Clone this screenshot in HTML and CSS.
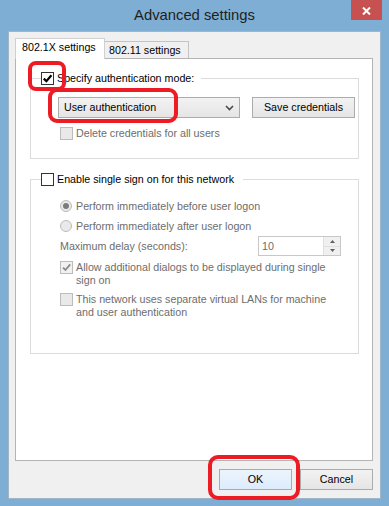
FILE: index.html
```html
<!DOCTYPE html>
<html lang="en">
<head>
<meta charset="utf-8">
<title>Advanced settings</title>
<link rel="stylesheet" href="styles.css">
</head>
<body>
<div class="window">
  <div class="titlebar">
    <div class="title">Advanced settings</div>
    <div class="close"><svg width="9" height="8" viewBox="0 0 9 8"><path d="M1 0.5L8 7.5M8 0.5L1 7.5" stroke="#fff" stroke-width="2"/></svg></div>
  </div>
  <div class="client">
    <div class="tabs">
      <div class="tab active">802.1X settings</div>
      <div class="tab">802.11 settings</div>
    </div>
    <div class="panel">
      <fieldset class="group g1">
        <legend><span class="opt legend-in"><span class="cb"><svg width="11" height="11" viewBox="0 0 11 11"><path d="M1.8 5.6L4.4 8.2L9.4 2.2" fill="none" stroke="#000" stroke-width="2.2"/></svg></span><span>Specify authentication mode:</span></span></legend>
        <div class="auth-row">
          <div class="select"><span>User authentication</span><svg class="chev" width="9" height="6" viewBox="0 0 9 6"><path d="M1 1L4.5 4.5L8 1" fill="none" stroke="#4a4a4a" stroke-width="1.6"/></svg></div>
          <button class="btn save">Save credentials</button>
        </div>
        <div class="opt dis sub del"><span class="cb off"></span><span>Delete credentials for all users</span></div>
      </fieldset>
      <fieldset class="group g2">
        <legend><span class="opt legend-in"><span class="cb"></span><span>Enable single sign on for this network</span></span></legend>
        <div class="opt dis sub r1"><span class="radio on"></span><span>Perform immediately before user logon</span></div>
        <div class="opt dis sub r2"><span class="radio"></span><span>Perform immediately after user logon</span></div>
        <div class="delay sub dis">
          <span class="delay-label">Maximum delay (seconds):</span>
          <div class="spin">
            <span class="val">10</span>
            <span class="arrows">
              <span class="arr"><svg width="5" height="3" viewBox="0 0 5 3"><path d="M0 3L2.5 0L5 3Z" fill="#606060"/></svg></span>
              <span class="arr"><svg width="5" height="3" viewBox="0 0 5 3"><path d="M0 0L2.5 3L5 0Z" fill="#606060"/></svg></span>
            </span>
          </div>
        </div>
        <div class="opt dis sub c3"><span class="cb off"><svg width="11" height="11" viewBox="0 0 11 11"><path d="M2 5.6L4.4 8L9.2 2.4" fill="none" stroke="#8a8a8a" stroke-width="1.8"/></svg></span><span class="wrap">Allow additional dialogs to be displayed during single sign on</span></div>
        <div class="opt dis sub c4"><span class="cb off"></span><span class="wrap">This network uses separate virtual LANs for machine and user authentication</span></div>
      </fieldset>
    </div>
    <div class="actions">
      <button class="btn ok">OK</button>
      <button class="btn cancel">Cancel</button>
    </div>
  </div>
  <div class="mark m1"></div>
  <div class="mark m2"></div>
  <div class="mark m3"></div>
</div>
</body>
</html>
```
FILE: styles.css
```css
* { box-sizing: border-box; }
html, body { margin: 0; padding: 0; }
body {
  width: 389px;
  height: 506px;
  overflow: hidden;
  background: #7eaed3;
  font-family: "Liberation Sans", Arial, sans-serif;
  font-size: 10.7px;
  line-height: 13px;
  color: #000;
}
.window {
  position: relative;
  height: 506px;
  display: flex;
  flex-direction: column;
}
.titlebar {
  flex: none;
  height: 31px;
  display: flex;
  align-items: flex-start;
  padding: 0 7px 0 38px;
}
.title {
  flex: 1;
  text-align: center;
  font-size: 14.8px;
  line-height: 31px;
  color: #1e1e1e;
}
.close {
  flex: none;
  width: 31px;
  height: 20px;
  background: #c75050;
  display: flex;
  align-items: center;
  justify-content: center;
  padding-top: 2px;
}
.close svg { display: block; }
.client {
  flex: none;
  height: 468px;
  margin: 0 8px;
  background: #f0f0f0;
  border: 1px solid #9fb6c8;
  padding: 6px 7px 8px 6px;
  display: flex;
  flex-direction: column;
}
.tabs {
  flex: none;
  height: 20px;
  display: flex;
  align-items: flex-end;
}
.tab {
  width: 85px;
  height: 17px;
  margin-left: -1px;
  border: 1px solid #c4c4c4;
  border-bottom: none;
  background: #f0f0f0;
  padding: 2px 0 0 4px;
  white-space: nowrap;
}
.tab.active {
  width: 90px;
  height: 21px;
  margin-left: 0;
  margin-bottom: -1px;
  position: relative;
  z-index: 1;
  background: #fff;
  border-color: #d0d0d0;
  padding: 2px 0 0 6px;
}
.panel {
  flex: 1;
  background: #fff;
  border: 1px solid #b4b4b4;
  padding: 12px 13px 0 14px;
}
.group {
  margin: 0;
  min-width: 0;
  border: 1px solid #dcdcdc;
  padding: 12px 0 18px 10px;
}
.group legend {
  padding: 0 7px 0 0;
  margin: 0;
}
.g2 {
  margin-top: 13px;
  padding: 14px 0 34px 10px;
}
.g2 legend { padding-right: 9px; }
.opt {
  display: flex;
  align-items: flex-start;
  gap: 3px;
}
.wrap { max-width: 262px; }
.legend-in {
  height: 14px;
  align-items: center;
}
.dis { color: #6d6d6d; }
.sub { margin-left: 19px; }
.cb {
  flex: none;
  width: 13px;
  height: 13px;
  border: 1px solid #333;
  background: #fff;
  display: flex;
  align-items: center;
  justify-content: center;
}
.cb svg { display: block; }
.cb.off {
  border-color: #bcbcbc;
  background: #e9e9e9;
}
.c3 .cb.off { background: #f1f1f1; }
.radio {
  flex: none;
  width: 12px;
  height: 12px;
  margin: 0 1px 0 0;
  border-radius: 50%;
  border: 1px solid #bcbcbc;
  background: #e9e9e9;
  display: flex;
  align-items: center;
  justify-content: center;
}
.radio.on::after {
  content: "";
  width: 6px;
  height: 6px;
  border-radius: 50%;
  background: #7a7a7a;
}
.auth-row {
  display: flex;
  height: 21px;
  margin-left: 17px;
}
.select {
  width: 182px;
  height: 21px;
  border: 1px solid #acacac;
  background: linear-gradient(#f2f2f2, #e5e5e5);
  display: flex;
  align-items: center;
  justify-content: space-between;
  padding: 0 5px 0 5px;
}
.chev { display: block; margin-top: 1px; }
.btn {
  font: inherit;
  color: #000;
  margin: 0;
  padding: 0;
  height: 21px;
  border: 1px solid #acacac;
  border-radius: 0;
  background: linear-gradient(#f2f2f2, #e5e5e5);
  text-align: center;
  line-height: 19px;
}
.save {
  width: 103px;
  margin-left: 12px;
}
.del { margin-top: 9px; }
.r2 { margin-top: 7px; }
.delay {
  margin-top: 3px;
  height: 20px;
  display: flex;
  align-items: center;
}
.delay-label {
  flex: none;
  width: 198px;
}
.spin {
  width: 83px;
  height: 20px;
  border: 1px solid #c8c8c8;
  background: #fff;
  display: flex;
}
.spin .val {
  flex: 1;
  padding-left: 3px;
  line-height: 18px;
  color: #6d6d6d;
}
.arrows {
  width: 17px;
  display: flex;
  flex-direction: column;
  border-left: 1px solid #e0e0e0;
}
.arr {
  flex: 1;
  display: flex;
  align-items: center;
  justify-content: center;
  background: #f0f0f0;
}
.arr + .arr { border-top: 1px solid #e0e0e0; }
.arr svg { display: block; }
.c3 { margin-top: 5px; }
.c4 { margin-top: 6px; }
.actions {
  flex: none;
  height: 21px;
  margin-top: 8px;
  display: flex;
  justify-content: flex-end;
  gap: 8px;
}
.ok, .cancel { width: 73px; }
.ok {
  border-color: #7eb4ea;
  background: linear-gradient(#ecf4fc, #dcecfc);
}
.mark {
  position: absolute;
  border: 4px solid #ed1c24;
  border-radius: 9px;
}
.m1 { left: 28px; top: 61px; width: 38px; height: 30px; border-radius: 8px; }
.m2 { left: 48px; top: 88px; width: 130px; height: 35px; }
.m3 { left: 208px; top: 455px; width: 92px; height: 45px; border-radius: 10px; }
```
